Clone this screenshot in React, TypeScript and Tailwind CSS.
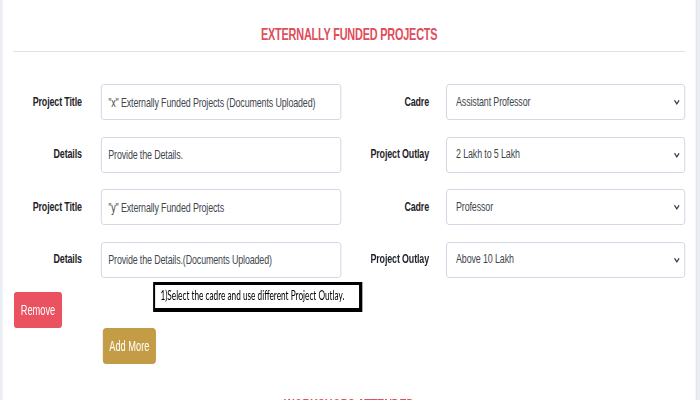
import React from 'react';

// The reference is a horizontally squeezed page, so the page is laid out at full
// width and squeezed once at the root.
type Row = {
  leftLabel: string;
  leftValue: string;
  rightLabel: string;
  rightValue: string;
};

const rows: Row[] = [
  {
    leftLabel: 'Project Title',
    leftValue: '"x" Externally Funded Projects (Documents Uploaded)',
    rightLabel: 'Cadre',
    rightValue: 'Assistant Professor',
  },
  {
    leftLabel: 'Details',
    leftValue: 'Provide the Details.',
    rightLabel: 'Project Outlay',
    rightValue: '2 Lakh to 5 Lakh',
  },
  {
    leftLabel: 'Project Title',
    leftValue: '"y" Externally Funded Projects',
    rightLabel: 'Cadre',
    rightValue: 'Professor',
  },
  {
    leftLabel: 'Details',
    leftValue: 'Provide the Details.(Documents Uploaded)',
    rightLabel: 'Project Outlay',
    rightValue: 'Above 10 Lakh',
  },
];

function Chevron() {
  return (
    <svg
      viewBox="0 0 10 6"
      className="pointer-events-none absolute right-[8px] top-1/2 -translate-y-1/2 w-[9px] h-[6px]"
    >
      <path d="M1 1l4 4 4-4" fill="none" stroke="#343a40" strokeWidth="1.8" />
    </svg>
  );
}

function FieldRow({ row }: { row: Row }) {
  return (
    <div className="flex items-center h-[36px]">
      <label className="w-[104px] text-right text-[13.5px] tracking-[-0.2px] font-bold text-[#1f2328]">
        {row.leftLabel}
      </label>
      <input
        type="text"
        defaultValue={row.leftValue}
        className="ml-[29px] w-[364px] h-[36px] rounded-[4px] border border-[#c9cfdf] bg-white pl-[10px] text-[13.5px] tracking-[-0.2px] text-[#41474e] outline-none"
      />
      <label className="w-[133px] text-right text-[13.5px] tracking-[-0.2px] font-bold text-[#1f2328]">
        {row.rightLabel}
      </label>
      <div className="relative ml-[26px] w-[362px]">
        <select
          defaultValue={row.rightValue}
          className="w-full h-[36px] appearance-none rounded-[4px] border border-[#c9cfdf] bg-white pl-[14px] text-[13.5px] tracking-[-0.2px] text-[#41474e] outline-none"
        >
          <option>{row.rightValue}</option>
        </select>
        <Chevron />
      </div>
    </div>
  );
}

export default function App() {
  return (
    <div className="w-[700px] h-[400px] overflow-hidden bg-[#eaeef3] font-['Liberation_Sans',Arial,sans-serif]">
      <div className="w-[1061px] h-[400px] origin-top-left scale-x-[0.66] pl-[4px] pr-[5px]">
        <div className="h-full bg-white px-[16px] border-r-2 border-[#e1e6ec]">
          <h2 className="pt-[22px] text-center text-[16.5px] tracking-[-0.3px] leading-[24px] font-bold text-[#e14d5a]">
            EXTERNALLY FUNDED PROJECTS
          </h2>
          <div className="mt-[5px] h-px bg-[#dce2e9]" />

          <div className="mt-[32px] flex flex-col gap-[16.5px]">
            {rows.map((row, i) => (
              <FieldRow key={i} row={row} />
            ))}
          </div>

          <div className="flex items-start">
            <button
              type="button"
              className="mt-[14.5px] ml-[1px] w-[73px] h-[36px] rounded-[4px] bg-[#e9525e] text-[14px] text-white"
            >
              Remove
            </button>
            <div className="mt-[4.5px] ml-[138px] w-[317px] h-[30px] border-[3px] border-r-[5px] border-b-[4px] border-black bg-white pl-[8px] font-['Lato',sans-serif] text-[12.5px] leading-[22px] text-black">
              1)Select the cadre and use different Project Outlay.
            </div>
          </div>

          <button
            type="button"
            className="ml-[136px] w-[80px] h-[36px] rounded-[4px] border border-[#b88f3a] bg-[#c49c46] text-[14px] text-white"
          >
            Add More
          </button>

          <h2 className="mt-[29px] text-center text-[16.5px] tracking-[-0.3px] leading-[24px] font-bold text-[#e14d5a]">
            WORKSHOPS ATTENDED
          </h2>
        </div>
      </div>
    </div>
  );
}
